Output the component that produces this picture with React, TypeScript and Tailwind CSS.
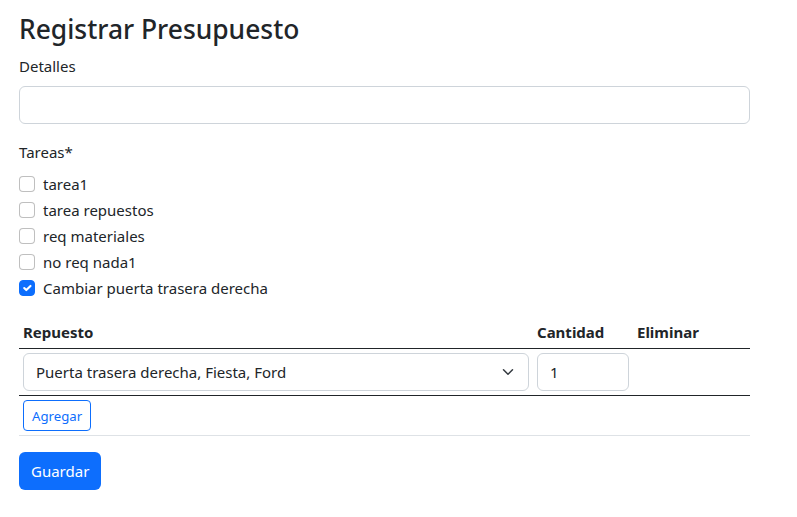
import { useState } from 'react';

const tareasIniciales = [
    { id: 1, nombre: 'tarea1', checked: false },
    { id: 2, nombre: 'tarea repuestos', checked: false },
    { id: 3, nombre: 'req materiales', checked: false },
    { id: 4, nombre: 'no req nada1', checked: false },
    { id: 5, nombre: 'Cambiar puerta trasera derecha', checked: true },
];

function Checkbox({ checked, onChange }: { checked: boolean; onChange: () => void }) {
    return (
        <button
            type="button"
            onClick={onChange}
            className={`mt-1 w-4 h-4 shrink-0 rounded-[4px] border flex items-center justify-center ${checked ? 'bg-[#0d6efd] border-[#0d6efd]' : 'bg-white border-[rgba(0,0,0,0.25)]'}`}
        >
            {checked && (
                <svg viewBox="0 0 20 20" className="w-4 h-4">
                    <path d="m6 10 3 3 6-6" fill="none" stroke="#fff" strokeWidth="3" strokeLinecap="round" strokeLinejoin="round" />
                </svg>
            )}
        </button>
    );
}

export default function App() {
    const [tareas, setTareas] = useState(tareasIniciales);
    const [detalles, setDetalles] = useState('');
    const [cantidad, setCantidad] = useState('1');

    const toggle = (id: number) => {
        setTareas(tareas.map(t => (t.id === id ? { ...t, checked: !t.checked } : t)));
    };

    return (
        <div className="min-h-screen bg-white text-[#212529] text-[15px] leading-6 font-['Noto_Sans','Open_Sans',sans-serif] pl-[19px] pt-[12px]">
            <div className="w-[731px]">
                <h2 className="text-[26.4px] leading-[34px] font-medium mb-2">Registrar Presupuesto</h2>

                <label className="block mb-2">Detalles</label>
                <input
                    value={detalles}
                    onChange={e => setDetalles(e.target.value)}
                    className="block w-full h-[38px] px-3 border border-[#ced4da] rounded-[6px] outline-none mb-4"
                />

                <label className="block mb-2">Tareas*</label>
                <div className="mb-4">
                    {tareas.map(t => (
                        <div key={t.id} className="flex gap-2 min-h-6 mb-[2px]">
                            <Checkbox checked={t.checked} onChange={() => toggle(t.id)} />
                            <span className="leading-6">{t.nombre}</span>
                        </div>
                    ))}
                </div>

                <div className="grid grid-cols-[514px_100px_117px] mb-4">
                    <div className="px-1 py-1 font-bold border-b border-[#212529]">Repuesto</div>
                    <div className="px-1 py-1 font-bold border-b border-[#212529]">Cantidad</div>
                    <div className="px-1 py-1 font-bold border-b border-[#212529]">Eliminar</div>

                    <div className="p-1 border-b border-[#212529]">
                        <div className="relative h-[38px] border border-[#ced4da] rounded-[6px] flex items-center pl-3 pr-9">
                            <span>Puerta trasera derecha, Fiesta, Ford</span>
                            <svg viewBox="0 0 16 16" className="absolute right-3 top-[12px] w-4 h-3">
                                <path d="m2 5 6 6 6-6" fill="none" stroke="#343a40" strokeWidth="2" strokeLinecap="round" strokeLinejoin="round" />
                            </svg>
                        </div>
                    </div>
                    <div className="p-1 border-b border-[#212529]">
                        <input
                            value={cantidad}
                            onChange={e => setCantidad(e.target.value)}
                            className="block w-full h-[38px] px-3 border border-[#ced4da] rounded-[6px] outline-none"
                        />
                    </div>
                    <div className="p-1 border-b border-[#212529]"></div>

                    <div className="col-span-3 p-1 border-b border-[#dee2e6]">
                        <button className="h-[31px] px-2 text-[13.2px] text-[#0d6efd] border border-[#0d6efd] rounded-[4px]">Agregar</button>
                    </div>
                </div>

                <button className="h-[38px] px-3 bg-[#0d6efd] text-white rounded-[6px]">Guardar</button>
            </div>
        </div>
    );
}
